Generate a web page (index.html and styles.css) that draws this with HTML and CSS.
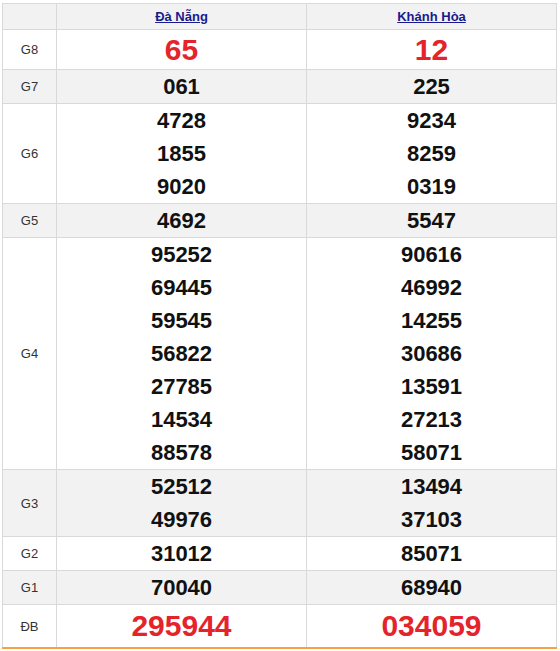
FILE: index.html
```html
<!DOCTYPE html>
<html>
<head>
<meta charset="utf-8">
<link rel="stylesheet" href="styles.css">
</head>
<body>
<div class="wrap">
<table class="kq">
  <colgroup><col class="c-label"><col class="c-prov"><col class="c-prov"></colgroup>
  <thead>
    <tr class="hdr"><th></th><th><a href="#">Đà Nẵng</a></th><th><a href="#">Khánh Hòa</a></th></tr>
  </thead>
  <tbody>
    <tr class="g8"><td class="lbl">G8</td><td><div class="n big red">65</div></td><td><div class="n big red">12</div></td></tr>
    <tr class="alt"><td class="lbl">G7</td><td><div class="n">061</div></td><td><div class="n">225</div></td></tr>
    <tr><td class="lbl">G6</td><td><div class="n">4728</div><div class="n">1855</div><div class="n">9020</div></td><td><div class="n">9234</div><div class="n">8259</div><div class="n">0319</div></td></tr>
    <tr class="alt"><td class="lbl">G5</td><td><div class="n">4692</div></td><td><div class="n">5547</div></td></tr>
    <tr><td class="lbl">G4</td><td><div class="n">95252</div><div class="n">69445</div><div class="n">59545</div><div class="n">56822</div><div class="n">27785</div><div class="n">14534</div><div class="n">88578</div></td><td><div class="n">90616</div><div class="n">46992</div><div class="n">14255</div><div class="n">30686</div><div class="n">13591</div><div class="n">27213</div><div class="n">58071</div></td></tr>
    <tr class="alt"><td class="lbl">G3</td><td><div class="n">52512</div><div class="n">49976</div></td><td><div class="n">13494</div><div class="n">37103</div></td></tr>
    <tr><td class="lbl">G2</td><td><div class="n">31012</div></td><td><div class="n">85071</div></td></tr>
    <tr class="alt"><td class="lbl">G1</td><td><div class="n">70040</div></td><td><div class="n">68940</div></td></tr>
    <tr class="db"><td class="lbl">ĐB</td><td><div class="n big red">295944</div></td><td><div class="n big red">034059</div></td></tr>
  </tbody>
</table>
</div>
</body>
</html>
```
FILE: styles.css
```css
html, body {
  margin: 0;
  padding: 0;
  background: #fff;
}
.wrap {
  padding: 3px 0 0 2px;
}
.kq {
  width: 555px;
  border-collapse: collapse;
  table-layout: fixed;
  font-family: "Liberation Sans", Arial, sans-serif;
  border-bottom: 2px solid #f5a247;
}
.c-label { width: 54px; }
.kq th, .kq td {
  border: 1px solid #d9d9d9;
  padding: 0;
  text-align: center;
  vertical-align: middle;
}
.hdr th {
  background: #f2f2f2;
  height: 25px;
  font-size: 13px;
  font-weight: bold;
}
.hdr a {
  color: #1a1a8c;
  text-decoration: underline;
}
.alt td {
  background: #f2f2f2;
}
.lbl {
  font-size: 13px;
  color: #333;
}
.n {
  font-size: 22px;
  font-weight: bold;
  color: #111;
  line-height: 33px;
}
.n.big {
  font-size: 30px;
}
.g8 .n { line-height: 39px; }
.db .n { line-height: 42px; }
.red { color: #e5232b; }
```
